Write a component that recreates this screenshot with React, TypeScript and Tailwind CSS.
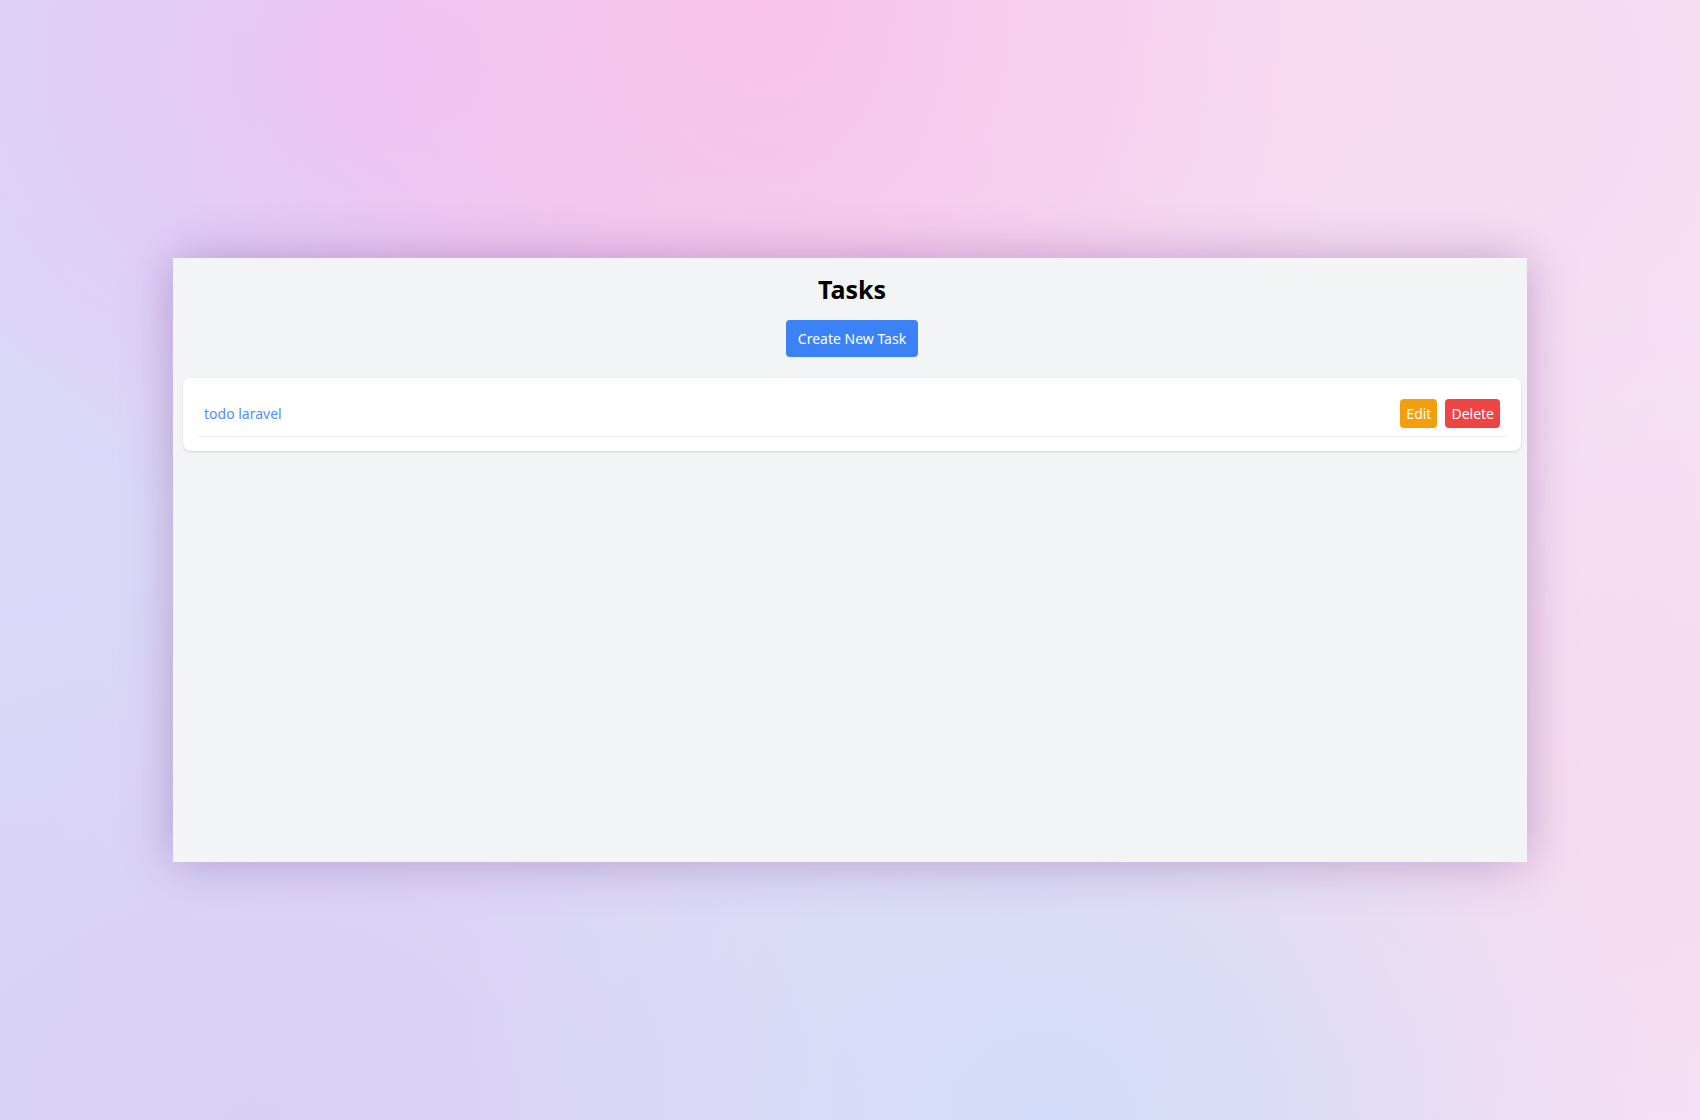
import React from 'react';

const tasks = [{ id: 1, title: 'todo laravel' }];

const App: React.FC = () => {
  return (
    <div
      className="flex h-screen w-full items-center justify-center bg-[radial-gradient(ellipse_at_45%_0%,#f9c3ec_0%,rgba(249,195,236,0)_45%),radial-gradient(ellipse_at_78%_8%,#f9dbf0_0%,rgba(249,219,240,0)_40%),radial-gradient(ellipse_at_24%_6%,#e8c2f4_0%,rgba(232,194,244,0)_32%),radial-gradient(ellipse_at_0%_35%,#d9d9f7_0%,rgba(217,217,247,0)_30%),radial-gradient(ellipse_at_62%_100%,#d3dcf8_0%,rgba(211,220,248,0)_40%),radial-gradient(ellipse_at_100%_70%,#f8dbef_0%,rgba(248,219,239,0)_40%),radial-gradient(ellipse_at_15%_100%,#d8cff4_0%,rgba(216,207,244,0)_35%),linear-gradient(90deg,#dad8f7,#e3dbf6_50%,#f5e0f5)]"
      style={{ fontFamily: '"Noto Sans", "Open Sans", sans-serif' }}
    >
      <div className="flex h-[604px] w-[1354px] flex-col bg-gray-100 shadow-[0_0_45px_rgba(110,50,130,0.35)]">
        <div className="flex flex-col items-center pl-1 pt-[15px]">
          <h1 className="text-[25px] font-bold leading-8 text-black">Tasks</h1>
          <button className="mt-[15px] rounded bg-[#3b82f6] px-3 py-2 text-[14px] leading-[21px] text-white">
            Create New Task
          </button>
        </div>

        <div className="ml-2.5 mr-1.5 mt-[21px] rounded-lg bg-white px-3.5 pb-3.5 pt-[13px] shadow">
          <ul>
            {tasks.map((t) => (
              <li key={t.id} className="flex items-center justify-between border-b border-[#eceef1] px-[7px] py-2">
                <a href="#" className="text-[14px] leading-[21px] text-[#4f8ef7]">
                  {t.title}
                </a>
                <div className="flex gap-2">
                  <button className="rounded bg-[#f59e0b] px-[6px] py-1 text-[14px] leading-[21px] text-white">Edit</button>
                  <button className="rounded bg-[#ef4444] px-[6px] py-1 text-[14px] leading-[21px] text-white">Delete</button>
                </div>
              </li>
            ))}
          </ul>
        </div>
      </div>
    </div>
  );
};

export default App;
